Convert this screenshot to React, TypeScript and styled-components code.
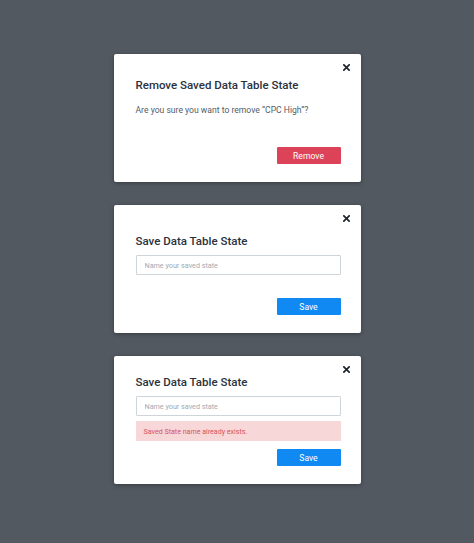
import { FC, ReactNode } from 'react';
import styled, { createGlobalStyle } from 'styled-components';

const GlobalStyle = createGlobalStyle`
    html, body {
        margin: 0;
        padding: 0;
        background: #535961;
    }
    body {
        font-family: Roboto, "Liberation Sans", Arial, sans-serif;
    }
`;

const Page = styled.div`
    min-height: 543px;
    display: flex;
    flex-direction: column;
    align-items: center;
    padding: 54px 0 0 0;
    gap: 23px;
    box-sizing: border-box;
`;

const Dialog = styled.div<{ $padTop: number }>`
    position: relative;
    width: 247px;
    height: 128px;
    box-sizing: border-box;
    padding: ${p => p.$padTop}px 20px 18px 22px;
    background: #ffffff;
    border-radius: 2px;
    box-shadow: 0 1px 4px rgba(0, 0, 0, 0.35);
    display: flex;
    flex-direction: column;
`;

const Close = styled.button`
    position: absolute;
    top: 8px;
    right: 9px;
    width: 10px;
    height: 10px;
    padding: 0;
    border: none;
    background: none;
    display: flex;
    align-items: center;
    justify-content: center;
    cursor: pointer;
`;

const Title = styled.h2`
    margin: 0;
    font-size: 11.5px;
    line-height: 16px;
    font-weight: 500;
    color: #2a323d;
`;

const Message = styled.p`
    margin: 11px 0 0 0;
    font-size: 8.6px;
    line-height: 12px;
    color: #545c67;
`;

const Input = styled.input`
    margin: 6px 0 0 0;
    width: 100%;
    height: 20px;
    box-sizing: border-box;
    border: 1px solid #cdd5db;
    border-radius: 1px;
    padding: 0 8px;
    font-family: inherit;
    font-size: 7.2px;
    color: #333;
    outline: none;
    &::placeholder {
        color: #a3a9b0;
    }
`;

const ErrorBox = styled.div`
    margin: 5px 0 0 0;
    height: 20px;
    display: flex;
    align-items: center;
    padding: 0 8px;
    background: #f8d7d8;
    color: #d4535f;
    font-size: 7.1px;
`;

const Footer = styled.div`
    margin-top: auto;
    display: flex;
    justify-content: flex-end;
`;

const Button = styled.button<{ $variant: 'danger' | 'primary' }>`
    width: 64px;
    height: 17px;
    border: none;
    border-radius: 1px;
    padding: 0;
    font-family: inherit;
    font-size: 8.6px;
    color: #ffffff;
    background: ${p => (p.$variant === 'danger' ? '#dc4359' : '#1089f3')};
    cursor: pointer;
`;

const CloseIcon: FC = () => (
    <svg width="7" height="7" viewBox="0 0 8 8">
        <path d="M1 1 L7 7 M7 1 L1 7" stroke="#1c222b" strokeWidth="1.9" strokeLinecap="square" />
    </svg>
);

interface IModalProps {
    title: string;
    padTop: number;
    children?: ReactNode;
    action: ReactNode;
}

const Modal: FC<IModalProps> = ({ title, padTop, children, action }) => (
    <Dialog $padTop={padTop}>
        <Close aria-label="Close"><CloseIcon /></Close>
        <Title>{title}</Title>
        {children}
        <Footer>{action}</Footer>
    </Dialog>
);

const App: FC = () => (
    <>
        <GlobalStyle />
        <Page>
            <Modal
                title="Remove Saved Data Table State"
                padTop={23}
                action={<Button $variant="danger">Remove</Button>}
            >
                <Message>Are you sure you want to remove “CPC High”?</Message>
            </Modal>
            <Modal
                title="Save Data Table State"
                padTop={28}
                action={<Button $variant="primary">Save</Button>}
            >
                <Input placeholder="Name your saved state" />
            </Modal>
            <Modal
                title="Save Data Table State"
                padTop={18}
                action={<Button $variant="primary">Save</Button>}
            >
                <Input placeholder="Name your saved state" />
                <ErrorBox>Saved State name already exists.</ErrorBox>
            </Modal>
        </Page>
    </>
);

export default App;
